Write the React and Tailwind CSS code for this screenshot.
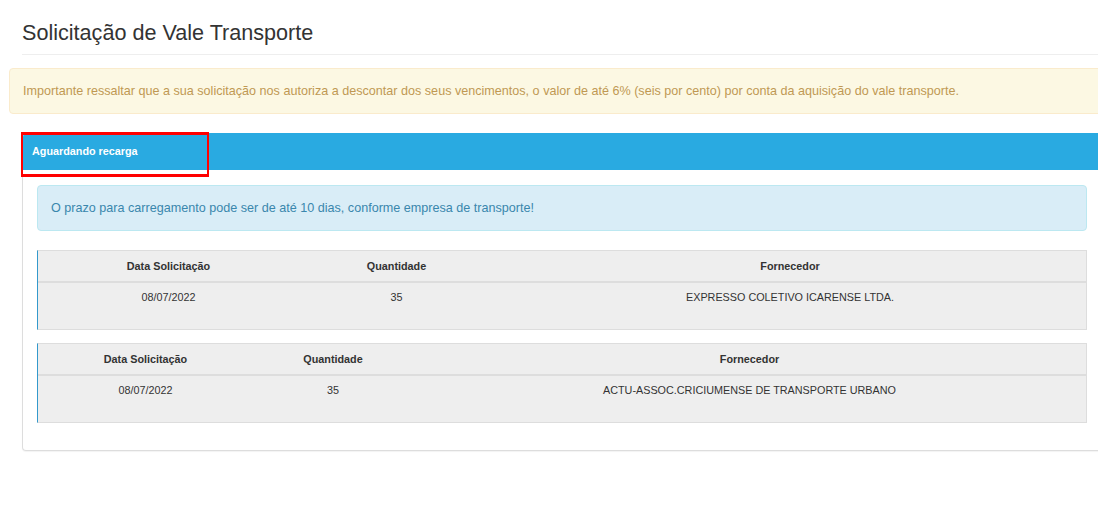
import React from 'react';

const requests = [
  {
    cols: ['w-[261px]', 'w-[195px]', ''],
    data: '08/07/2022',
    quantidade: '35',
    fornecedor: 'EXPRESSO COLETIVO ICARENSE LTDA.',
  },
  {
    cols: ['w-[215px]', 'w-[160px]', ''],
    data: '08/07/2022',
    quantidade: '35',
    fornecedor: 'ACTU-ASSOC.CRICIUMENSE DE TRANSPORTE URBANO',
  },
];

function RequestTable({ item }) {
  return (
    <div className="mb-[13px] border border-[#ddd] border-l-[#3399cc] bg-[#eeeeee]">
      <table className="w-full table-fixed border-collapse text-[10.8px] leading-[16px] text-[#333]">
        <colgroup>
          <col className={item.cols[0]} />
          <col className={item.cols[1]} />
          <col />
        </colgroup>
        <thead>
          <tr className="border-b-2 border-[#ddd]">
            <th className="py-[7px] text-center font-bold">Data Solicitação</th>
            <th className="py-[7px] text-center font-bold">Quantidade</th>
            <th className="py-[7px] text-center font-bold">Fornecedor</th>
          </tr>
        </thead>
        <tbody>
          <tr className="h-[47px]">
            <td className="pt-[6px] text-center align-top">{item.data}</td>
            <td className="pt-[6px] text-center align-top">{item.quantidade}</td>
            <td className="pt-[6px] text-center align-top">{item.fornecedor}</td>
          </tr>
        </tbody>
      </table>
    </div>
  );
}

export default function App() {
  return (
    <div className="min-h-[513px] w-[1098px] overflow-hidden bg-white font-['Liberation_Sans',Arial,sans-serif] text-[#333]">
      <div className="w-[1110px]">
        <div className="ml-[22px] border-b border-[#eee] pt-[21px] pb-[9px]">
          <h3 className="text-[21.6px] leading-[1.1] font-normal text-[#333]">
            Solicitação de Vale Transporte
          </h3>
        </div>

        <div className="mt-[13px] ml-[9px] w-[1100px] rounded-[4px] border border-[#faebcc] bg-[#fcf8e3] px-[13px] py-[13px] text-[12.6px] leading-[18px] text-[#c09853]">
          Importante ressaltar que a sua solicitação nos autoriza a descontar dos seus vencimentos, o valor de até 6% (seis por cento) por conta da aquisição do vale transporte.
        </div>

        <div className="relative mt-[19px] ml-[22px] w-[1080px] rounded-[4px] border border-[#ddd] border-t-0 shadow-[0_1px_1px_rgba(0,0,0,0.05)]">
          <div className="flex h-[37px] items-center rounded-t-[4px] bg-[#29aae1] px-[9px] text-[10.8px] font-bold text-white">
            Aguardando recarga
          </div>
          <div className="absolute top-[-1px] left-[-2px] h-[45px] w-[188px] border-[3px] border-x-2 border-[#f00]" />

          <div className="px-[14px] pt-[15px] pb-[14px]">
            <div className="mb-[19px] rounded-[4px] border border-[#bce8f1] bg-[#d9edf7] px-[13px] py-[13px] text-[12.6px] leading-[18px] text-[#3a87ad]">
              O prazo para carregamento pode ser de até 10 dias, conforme empresa de transporte!
            </div>

            {requests.map((item, i) => (
              <RequestTable key={i} item={item} />
            ))}
          </div>
        </div>
      </div>
    </div>
  );
}
